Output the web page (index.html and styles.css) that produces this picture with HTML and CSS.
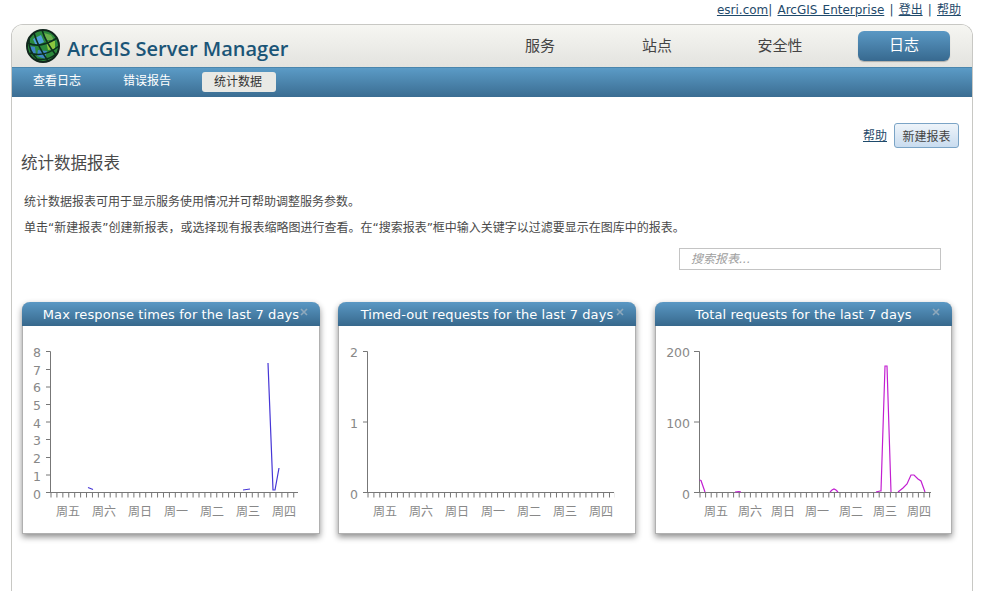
FILE: index.html
```html
<!DOCTYPE html>
<html lang="zh-CN">
<head>
    <meta charset="UTF-8">
    <title>ArcGIS Server Manager</title>
    <link rel="stylesheet" href="styles.css">
</head>
<body>
    <div class="top-links">
        <a href="#">esri.com</a>| <a href="#">ArcGIS Enterprise</a> | <a href="#">登出</a> | <a href="#">帮助</a>
    </div>

    <div class="frame">
        <header class="header">
            <div class="logo">
                <svg class="globe" width="34" height="34" viewBox="0 0 34 34">
                    <circle cx="17" cy="17" r="16" fill="#2c8a3c"/>
                    <path d="M7 10 L15 6 L18 13 L10 17 Z" fill="#4f9fd8"/>
                    <path d="M20 12 L29 12 L29 20 L22 21 Z" fill="#8cc63f"/>
                    <path d="M12 21 L21 22 L19 30 L11 27 Z" fill="#3f86c6"/>
                    <path d="M18 4 L25 6 L28 11 L20 11 Z" fill="#6ab04c"/>
                    <path d="M3 17 L9 18 L10 26 L5 24 Z" fill="#3f86c6"/>
                    <path d="M2 14 Q14 20 31 9 M4 24 Q18 29 33 17 M10 30 Q22 32 30 25 M8 4 Q12 18 22 32 M16 1 Q20 14 30 26 M3 10 Q2 22 12 31" fill="none" stroke="#0d2f1e" stroke-width="1.6"/>
                    <circle cx="17" cy="17" r="16" fill="none" stroke="#10261c" stroke-width="2"/>
                </svg>
                <span class="logo-text">ArcGIS Server Manager</span>
            </div>
            <nav class="main-nav">
                <a class="nav-item nav-services" href="#">服务</a>
                <a class="nav-item nav-site" href="#">站点</a>
                <a class="nav-item nav-security" href="#">安全性</a>
                <a class="nav-item nav-logs active" href="#">日志</a>
            </nav>
        </header>

        <nav class="sub-nav">
            <a href="#">查看日志</a>
            <a href="#">错误报告</a>
            <a class="current" href="#">统计数据</a>
        </nav>

        <main class="content">
            <div class="toolbar">
                <a class="help-link" href="#">帮助</a>
                <button class="new-report">新建报表</button>
            </div>

            <h2 class="page-title">统计数据报表</h2>
            <p class="intro intro-first">统计数据报表可用于显示服务使用情况并可帮助调整服务参数。</p>
            <p class="intro">单击“新建报表”创建新报表，或选择现有报表缩略图进行查看。在“搜索报表”框中输入关键字以过滤要显示在图库中的报表。</p>

            <div class="search-row">
                <input class="search" type="text" placeholder="搜索报表...">
            </div>

            <div class="reports">
                <section class="card">
                    <h3 class="card-title">Max response times for the last 7 days</h3>
                    <span class="card-close">
                        <svg width="8" height="8" viewBox="0 0 8 8"><path d="M1 1 L7 7 M7 1 L1 7"/></svg>
                    </span>
                    <svg class="chart" width="296" height="207" viewBox="23 326 296 207">
                        <path class="axis" d="M50.5 351.5 V492.5 M46 351.5 H50.5 M46 369.5 H50.5 M46 387 H50.5 M46 404.5 H50.5 M46 422 H50.5 M46 439.5 H50.5 M46 457.5 H50.5 M46 475 H50.5 M46 492.5 H298"/>
                        <line class="ticks" x1="50.5" y1="495" x2="299" y2="495" stroke-dasharray="1 4.92"/>
                        <text class="y-label" x="41" y="357">8</text>
                        <text class="y-label" x="41" y="375">7</text>
                        <text class="y-label" x="41" y="392">6</text>
                        <text class="y-label" x="41" y="410">5</text>
                        <text class="y-label" x="41" y="428">4</text>
                        <text class="y-label" x="41" y="445">3</text>
                        <text class="y-label" x="41" y="463">2</text>
                        <text class="y-label" x="41" y="481">1</text>
                        <text class="y-label" x="41" y="499">0</text>
                        <text class="x-label" x="68" y="516">周五</text>
                        <text class="x-label" x="104" y="516">周六</text>
                        <text class="x-label" x="140" y="516">周日</text>
                        <text class="x-label" x="176" y="516">周一</text>
                        <text class="x-label" x="212" y="516">周二</text>
                        <text class="x-label" x="248" y="516">周三</text>
                        <text class="x-label" x="284" y="516">周四</text>
                        <path class="line-blue" d="M88 487.5 L93 489.5 M243 490 L250 489 M268 363 L273 490 L275 490 L279 468"/>
                    </svg>
                </section>

                <section class="card">
                    <h3 class="card-title">Timed-out requests for the last 7 days</h3>
                    <span class="card-close">
                        <svg width="8" height="8" viewBox="0 0 8 8"><path d="M1 1 L7 7 M7 1 L1 7"/></svg>
                    </span>
                    <svg class="chart" width="296" height="207" viewBox="339 326 296 207">
                        <path class="axis" d="M367.5 351.5 V492.5 M363 351.5 H367.5 M363 422 H367.5 M363 492.5 H614"/>
                        <line class="ticks" x1="367.5" y1="495" x2="615" y2="495" stroke-dasharray="1 4.89"/>
                        <text class="y-label" x="358" y="357">2</text>
                        <text class="y-label" x="358" y="428">1</text>
                        <text class="y-label" x="358" y="499">0</text>
                        <text class="x-label" x="385" y="516">周五</text>
                        <text class="x-label" x="421" y="516">周六</text>
                        <text class="x-label" x="457" y="516">周日</text>
                        <text class="x-label" x="493" y="516">周一</text>
                        <text class="x-label" x="529" y="516">周二</text>
                        <text class="x-label" x="565" y="516">周三</text>
                        <text class="x-label" x="601" y="516">周四</text>
                    </svg>
                </section>

                <section class="card">
                    <h3 class="card-title">Total requests for the last 7 days</h3>
                    <span class="card-close">
                        <svg width="8" height="8" viewBox="0 0 8 8"><path d="M1 1 L7 7 M7 1 L1 7"/></svg>
                    </span>
                    <svg class="chart" width="295" height="207" viewBox="656 326 295 207">
                        <path class="axis" d="M699.5 351.5 V492.5 M694 351.5 H699.5 M694 422 H699.5 M694 492.5 H931"/>
                        <line class="ticks" x1="699.5" y1="495" x2="932" y2="495" stroke-dasharray="1 4.6"/>
                        <text class="y-label" x="690" y="357">200</text>
                        <text class="y-label" x="690" y="428">100</text>
                        <text class="y-label" x="690" y="499">0</text>
                        <text class="x-label" x="716" y="516">周五</text>
                        <text class="x-label" x="750" y="516">周六</text>
                        <text class="x-label" x="783" y="516">周日</text>
                        <text class="x-label" x="817" y="516">周一</text>
                        <text class="x-label" x="851" y="516">周二</text>
                        <text class="x-label" x="885" y="516">周三</text>
                        <text class="x-label" x="919" y="516">周四</text>
                        <path class="line-pink" d="M699.5 480 L701 480.5 L705 492 M735 492 L739 491.5 L741 492 M830 492 L832 490 L834 489 L836 490 L838 492 M876 492 L880 491 L881 491 L885 366 L887 366 L891 492 M898 492 L903 488 L907 484 L911 475 L914 475 L918 479 L921 481 L925 492"/>
                    </svg>
                </section>
            </div>
        </main>
    </div>
</body>
</html>
```

FILE: styles.css
```css
html, body {
    height: 100%;
    overflow: hidden;
}

body {
    margin: 0;
    background: #fff;
    color: #4a4a4a;
    font-family: "DejaVu Sans", "Noto Sans CJK SC", sans-serif;
    font-size: 12px;
}

a {
    color: #1f4a6b;
}

.top-links {
    height: 24px;
    padding: 3px 23px 0 0;
    box-sizing: border-box;
    text-align: right;
    color: #1f4a6b;
    line-height: 15px;
    word-spacing: 1.33px;
}

.frame {
    width: 962px;
    height: calc(100vh - 24px);
    margin-left: 11px;
    box-sizing: border-box;
    border: 1px solid #c8c8c4;
    border-bottom: 0;
    border-radius: 12px 12px 0 0;
}

.header {
    height: 42px;
    display: flex;
    justify-content: space-between;
    border-radius: 11px 11px 0 0;
    background: linear-gradient(#f6f6f2, #e3e3df);
}

.logo {
    display: flex;
    align-items: center;
    gap: 7px;
    padding: 0 0 0 14px;
}

.logo-text {
    padding-top: 4px;
    font-family: "Open Sans", sans-serif;
    font-size: 20px;
    font-weight: 600;
    color: #1b5577;
    white-space: nowrap;
}

.main-nav {
    display: flex;
    align-items: center;
    padding-right: 22px;
}

.nav-item {
    display: block;
    margin-bottom: 4px;
    color: #444;
    font-size: 15px;
    text-align: center;
    text-decoration: none;
}

.nav-services { width: 116px; }
.nav-site { width: 118px; }
.nav-security { width: 128px; margin-right: 14px; }

.nav-logs.active {
    width: 92px;
    height: 30px;
    margin-bottom: 0;
    line-height: 28px;
    border-radius: 6px;
    color: #fff;
    background: linear-gradient(#5a98c4, #37698f);
    box-shadow: 0 1px 1px rgba(0, 0, 0, 0.25);
}

.sub-nav {
    height: 30px;
    box-sizing: border-box;
    display: flex;
    align-items: flex-start;
    padding: 5px 0 0 21px;
    background: linear-gradient(#5b9bc6, #3b6d92);
    border-top: 1px solid #4a86ad;
}

.sub-nav a {
    line-height: 16px;
    margin-right: 42px;
    color: #fff;
    text-decoration: none;
}

.sub-nav a.current {
    margin: -1px 0 0 -11px;
    padding: 2px 14px 2px 12px;
    border-radius: 3px;
    color: #333;
    background: #e9e9e5;
}

.content {
    padding: 26px 13px 0 10px;
}

.toolbar {
    display: flex;
    justify-content: flex-end;
    align-items: center;
    gap: 7px;
}

.help-link {
    color: #1f4a6b;
    margin-bottom: 2px;
}

.new-report {
    width: 65px;
    height: 25px;
    padding: 0;
    border: 1px solid #7ba4c6;
    border-radius: 3px;
    color: #444;
    font: inherit;
    background: linear-gradient(#eef4fa, #c9dcef);
}

.page-title {
    margin: 4px 0 0 -1px;
    font-size: 16.5px;
    font-weight: normal;
    line-height: 24px;
    color: #4a4a4a;
}

.intro {
    margin: 0 0 0 2px;
    line-height: 18px;
    padding-top: 8px;
    white-space: nowrap;
}

.intro-first {
    padding-top: 17px;
}

.search-row {
    display: flex;
    justify-content: flex-end;
    padding: 11px 18px 0 0;
}

.search {
    width: 262px;
    height: 22px;
    box-sizing: border-box;
    padding: 0 11px;
    border: 1px solid #c4c4c4;
    font: inherit;
    font-style: italic;
}

.search::placeholder {
    color: #a0a0a0;
}

.reports {
    display: grid;
    grid-template-columns: repeat(3, 298px);
    column-gap: 18px;
    margin-top: 32px;
}

.card {
    position: relative;
    height: 232px;
    box-sizing: border-box;
    border-radius: 8px 8px 0 0;
    border: 1px solid #b0b0b0;
    border-top: 0;
    background: #fff;
    box-shadow: 0 3px 6px rgba(0, 0, 0, 0.45);
}

.card:last-child {
    width: 297px;
    margin-left: 1px;
}

.card-title {
    height: 24px;
    margin: 0 -1px;
    border-radius: 8px 8px 0 0;
    color: #fff;
    font-size: 13px;
    font-weight: normal;
    letter-spacing: 0.1px;
    line-height: 25px;
    text-align: center;
    white-space: nowrap;
    background: linear-gradient(#5a98c4, #37688c);
}

.card-close {
    position: absolute;
    top: 6px;
    right: 11px;
    line-height: 0;
}

.card-close path {
    stroke: #8fa9bc;
    stroke-width: 1.6;
    fill: none;
}

.chart {
    display: block;
}

.axis {
    fill: none;
    stroke: #777;
    stroke-width: 1;
}

.ticks {
    stroke: #777;
    stroke-width: 5;
}

.y-label {
    fill: #888;
    font-size: 12.5px;
    text-anchor: end;
}

.x-label {
    fill: #888;
    font-size: 12px;
    text-anchor: middle;
}

.line-blue,
.line-pink {
    fill: none;
    stroke-width: 1.2;
}

.line-blue { stroke: #4636d6; }
.line-pink { stroke: #c21fd1; }
```
